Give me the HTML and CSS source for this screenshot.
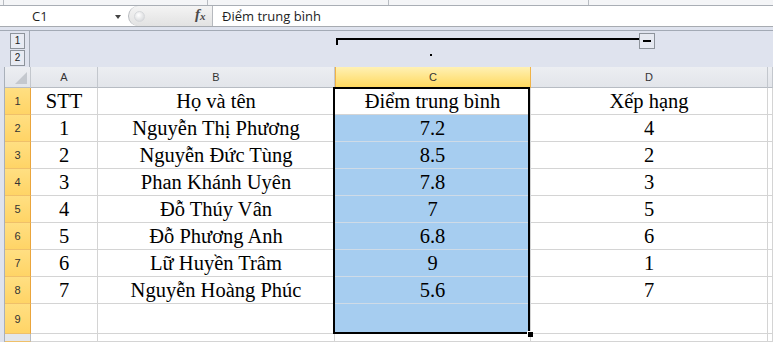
FILE: index.html
```html
<!DOCTYPE html>
<html lang="vi">
<head>
    <meta charset="UTF-8">
    <meta name="viewport" content="width=device-width, initial-scale=1.0">
    <title>Bảng điểm</title>
    <link rel="stylesheet" href="styles.css">
</head>
<body>
    <!-- Mép dưới của ribbon -->
    <div class="ribbon-edge">
        <span class="sep s1"></span>
        <span class="sep s2"></span>
        <span class="sep s3"></span>
        <span class="sep s4"></span>
    </div>

    <!-- Thanh công thức -->
    <div class="formula-bar">
        <div class="name-box">C1<span class="arrow"></span></div>
        <div class="fx-pill">
            <span class="grip"></span>
            <span class="fx">f<sub>x</sub></span>
        </div>
        <div class="formula">Điểm trung bình</div>
    </div>

    <!-- Vùng outline (nhóm cột) -->
    <div class="outline-bar">
        <div class="levels">
            <span class="level">1</span>
            <span class="level">2</span>
        </div>
        <div class="group-area">
            <span class="group-line"></span>
            <span class="group-tick"></span>
            <span class="group-dot"></span>
            <span class="group-btn"><span class="minus"></span></span>
        </div>
    </div>

    <!-- Bảng tính -->
    <div class="sheet">
        <div class="hdr corner"></div>
        <div class="hdr">A</div>
        <div class="hdr">B</div>
        <div class="hdr sel">C</div>
        <div class="hdr">D</div>
        <div class="hdr"></div>

        <div class="rh">1</div>
        <div class="cell">STT</div>
        <div class="cell">Họ và tên</div>
        <div class="cell">Điểm trung bình</div>
        <div class="cell">Xếp hạng</div>
        <div class="cell"></div>

        <div class="rh">2</div>
        <div class="cell">1</div>
        <div class="cell">Nguyễn Thị Phương</div>
        <div class="cell blue">7.2</div>
        <div class="cell">4</div>
        <div class="cell"></div>

        <div class="rh">3</div>
        <div class="cell">2</div>
        <div class="cell">Nguyễn Đức Tùng</div>
        <div class="cell blue">8.5</div>
        <div class="cell">2</div>
        <div class="cell"></div>

        <div class="rh">4</div>
        <div class="cell">3</div>
        <div class="cell">Phan Khánh Uyên</div>
        <div class="cell blue">7.8</div>
        <div class="cell">3</div>
        <div class="cell"></div>

        <div class="rh">5</div>
        <div class="cell">4</div>
        <div class="cell">Đỗ Thúy Vân</div>
        <div class="cell blue">7</div>
        <div class="cell">5</div>
        <div class="cell"></div>

        <div class="rh">6</div>
        <div class="cell">5</div>
        <div class="cell">Đỗ Phương Anh</div>
        <div class="cell blue">6.8</div>
        <div class="cell">6</div>
        <div class="cell"></div>

        <div class="rh">7</div>
        <div class="cell">6</div>
        <div class="cell">Lữ Huyền Trâm</div>
        <div class="cell blue">9</div>
        <div class="cell">1</div>
        <div class="cell"></div>

        <div class="rh">8</div>
        <div class="cell">7</div>
        <div class="cell">Nguyễn Hoàng Phúc</div>
        <div class="cell blue">5.6</div>
        <div class="cell">7</div>
        <div class="cell"></div>

        <div class="rh">9</div>
        <div class="cell"></div>
        <div class="cell"></div>
        <div class="cell blue"></div>
        <div class="cell"></div>
        <div class="cell"></div>

        <div class="rh off"></div>
        <div class="cell"></div>
        <div class="cell"></div>
        <div class="cell"></div>
        <div class="cell"></div>
        <div class="cell"></div>

        <!-- Khung vùng chọn C1:C9 -->
        <div class="selection"></div>
        <div class="fill-handle"></div>
    </div>
</body>
</html>
```

FILE: styles.css
```css
body {
    margin: 0;
    width: 773px;
    height: 342px;
    overflow: hidden;
    background: #dfe3ee;
    font-family: "Open Sans", "Liberation Sans", sans-serif;
}

/* mép ribbon */
.ribbon-edge {
    position: relative;
    height: 5px;
    background: #f4f5f7;
    border-bottom: 1px solid #a9aeb5;
}
.sep {
    position: absolute;
    top: 0;
    height: 5px;
    border-left: 1px solid #b8bcc2;
}
.s1 { left: 3px; }
.s2 { left: 207px; }
.s3 { left: 388px; }
.s4 { left: 588px; }

/* thanh công thức */
.formula-bar {
    display: flex;
    height: 20px;
    background: #fff;
    border-bottom: 1px solid #a7abb1;
}
.name-box {
    position: relative;
    width: 128px;
    padding-left: 32px;
    box-sizing: border-box;
    font-size: 13px;
    line-height: 20px;
    color: #1e1e1e;
}
.arrow {
    position: absolute;
    left: 115px;
    top: 9px;
    border-left: 3.5px solid transparent;
    border-right: 3.5px solid transparent;
    border-top: 4px solid #444;
}
.fx-pill {
    position: relative;
    width: 85px;
    background: linear-gradient(#f4f4f4, #e2e2e2);
    border-left: 1px solid #b6b9be;
    border-right: 1px solid #b6b9be;
    border-radius: 11px 0 0 11px;
    box-sizing: border-box;
}
.grip {
    position: absolute;
    left: 5px;
    top: 5px;
    width: 9px;
    height: 9px;
    border-radius: 50%;
    background: radial-gradient(circle at 40% 35%, #ffffff, #cfd1d4);
    border: 1px solid #d6d8db;
}
.fx {
    position: absolute;
    left: 66px;
    top: 0;
    font-family: "Liberation Serif", serif;
    font-style: italic;
    font-weight: bold;
    font-size: 15px;
    color: #4a4a4a;
}
.fx sub {
    font-size: 11px;
    vertical-align: -1px;
}
.formula {
    padding-left: 9px;
    font-size: 13px;
    line-height: 20px;
    color: #1e1e1e;
}

/* vùng outline */
.outline-bar {
    display: flex;
    margin-top: 3px;
    height: 36px;
    border-top: 1px solid #a3aab5;
}
.levels {
    width: 26px;
    margin-left: 4px;
    border-right: 1px solid #a3aab5;
    display: flex;
    flex-direction: column;
    gap: 1px;
    padding: 2px 0 0 6px;
    box-sizing: border-box;
}
.level {
    width: 13px;
    height: 14px;
    border: 1px solid #8d939b;
    background: #e8ebf3;
    font-family: "Liberation Sans", sans-serif;
    font-size: 10px;
    line-height: 14px;
    text-align: center;
    color: #222;
}
.group-area {
    position: relative;
    flex: 1;
}
.group-line {
    position: absolute;
    left: 306px;
    top: 7px;
    width: 303px;
    height: 2px;
    background: #000;
}
.group-tick {
    position: absolute;
    left: 306px;
    top: 7px;
    width: 2px;
    height: 7px;
    background: #000;
}
.group-dot {
    position: absolute;
    left: 400px;
    top: 23px;
    width: 2px;
    height: 2px;
    background: #000;
}
.group-btn {
    position: absolute;
    left: 609px;
    top: 2px;
    width: 14px;
    height: 14px;
    border: 1px solid #8d939b;
    background: #e6e9f1;
}
.minus {
    position: absolute;
    left: 3px;
    top: 6px;
    width: 8px;
    height: 2px;
    background: #000;
}

/* bảng tính */
.sheet {
    position: relative;
    margin-left: 4px;
    border-left: 1px solid #a9b0ba;
    display: grid;
    grid-template-columns: 26px 67px 237px 196px 237px 1fr;
    grid-template-rows: 21px repeat(8, 27px) 30px 1fr;
    height: 275px;
    background: #fff;
}
.hdr, .rh, .cell {
    box-sizing: border-box;
    border-right: 1px solid #d4d4d4;
    border-bottom: 1px solid #d4d4d4;
    display: flex;
    align-items: center;
    justify-content: center;
}
.hdr {
    background: linear-gradient(#eceef2, #e2e5ea);
    border-right-color: #c3c7cd;
    border-bottom-color: #b7bcc3;
    font-family: "Liberation Sans", sans-serif;
    font-size: 11px;
    color: #333;
}
.hdr.corner {
    position: relative;
}
.hdr.corner::after {
    content: "";
    position: absolute;
    right: 3px;
    bottom: 3px;
    border-left: 12px solid transparent;
    border-bottom: 12px solid #c4c8ce;
}
.hdr.sel {
    background: linear-gradient(#fff1b4, #ffd95f);
    border-left: 1px solid #f0b347;
    border-right-color: #f0b347;
    border-bottom-color: #f0b347;
}
.rh {
    background: linear-gradient(#ffdf82, #ffd466);
    border-right-color: #eaa53c;
    border-bottom-color: #efc06a;
    font-family: "Liberation Sans", sans-serif;
    font-size: 11px;
    color: #333;
}
.rh.off {
    background: #e3e6eb;
    border-right-color: #b7bcc3;
}
.cell {
    font-family: "Liberation Serif", serif;
    font-size: 20.5px;
    color: #000;
}
.cell.blue {
    background: #a6cdf0;
    border-bottom-color: #cfdbe7;
}

.selection {
    position: absolute;
    left: 328px;
    top: 20px;
    width: 197px;
    height: 247px;
    border: 2px solid #000;
    box-sizing: border-box;
}
.fill-handle {
    position: absolute;
    left: 522px;
    top: 264px;
    width: 5px;
    height: 5px;
    background: #000;
    border-left: 1px solid #fff;
    border-top: 1px solid #fff;
}
```
